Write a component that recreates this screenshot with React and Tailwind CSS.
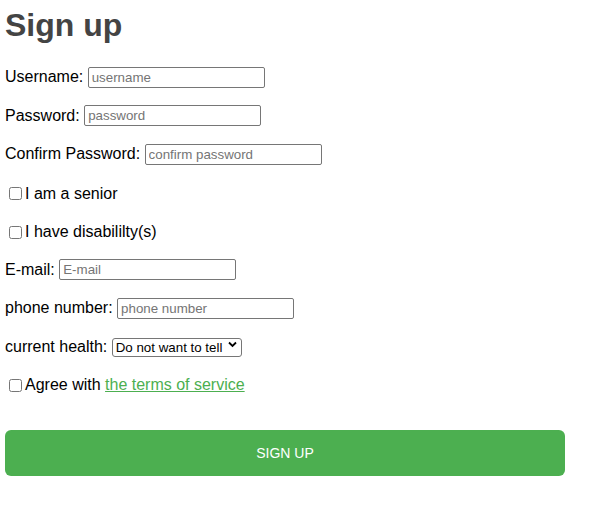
import React from "react";

const font = { fontFamily: '"Liberation Sans", Arial, sans-serif' };

function TextRow({ label, placeholder, type = "text" }) {
  return (
    <div className="flex h-[24px] items-center">
      <span>{label}</span>
      <span className="w-[4.45px]" />
      <input
        type={type}
        placeholder={placeholder}
        className="h-[21px] w-[177px] rounded-[2px] border border-[#767676] bg-white px-[3px] text-[13.33px] text-black placeholder:text-[#757575] outline-none"
      />
    </div>
  );
}

function CheckRow({ children }) {
  return (
    <label className="flex h-[24px] items-center pt-[2px]">
      <input type="checkbox" className="ml-[4px] mr-[3px] h-[13px] w-[13px]" />
      <span>{children}</span>
    </label>
  );
}

export default function App() {
  return (
    <div className="min-h-[511px] w-[596px] bg-white pl-[5px] text-[16px] text-black" style={font}>
      <h1 className="pt-[7px] text-[32px] leading-[37px] font-bold text-[#444444]">Sign up</h1>
      <form className="mt-[21px] flex flex-col gap-[14.5px]">
        <TextRow label="Username:" placeholder="username" />
        <TextRow label="Password:" placeholder="password" type="password" />
        <TextRow label="Confirm Password:" placeholder="confirm password" type="password" />
        <CheckRow>I am a senior</CheckRow>
        <CheckRow>I have disabililty(s)</CheckRow>
        <TextRow label="E-mail:" placeholder="E-mail" />
        <TextRow label="phone number:" placeholder="phone number" />
        <div className="flex h-[24px] items-center">
          <span>current health:</span>
          <span className="w-[4.45px]" />
          <div className="relative">
            <select className="h-[19px] w-[130px] appearance-none rounded-[3px] border border-[#767676] bg-white pl-[3px] text-[13.33px] leading-[17px] text-black outline-none">
              <option>Do not want to tell</option>
              <option>Good</option>
              <option>Bad</option>
            </select>
            <svg
              className="pointer-events-none absolute right-[5px] top-[6px]"
              width="9"
              height="7"
              viewBox="0 0 9 7"
              fill="none"
            >
              <path d="M1 1.5 L4.5 5 L8 1.5" stroke="#000" strokeWidth="1.8" />
            </svg>
          </div>
        </div>
        <label className="flex h-[24px] items-center">
          <input type="checkbox" className="ml-[4px] mr-[3px] h-[13px] w-[13px]" />
          <span>
            Agree with{" "}
            <a href="#" className="text-[#4CAF50] underline">
              the terms of service
            </a>
          </span>
        </label>
        <button
          type="button"
          className="mt-[18.5px] h-[46px] w-[560px] rounded-[6px] bg-[#4CAF50] text-[14px] text-white"
        >
          SIGN UP
        </button>
      </form>
    </div>
  );
}
